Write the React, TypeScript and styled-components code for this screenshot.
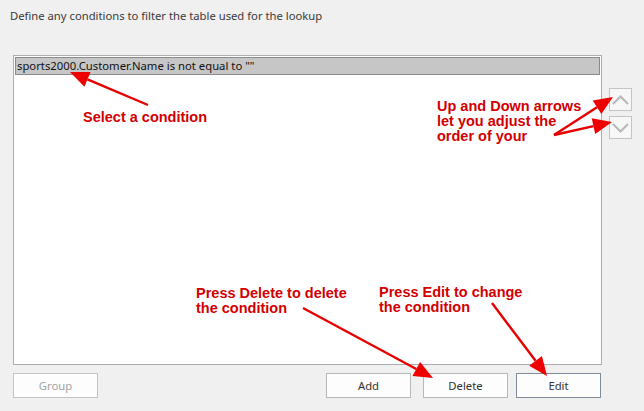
import React from "react";
import styled, { createGlobalStyle } from "styled-components";

const Global = createGlobalStyle`
  html, body { margin: 0; padding: 0; background: #f0f0f0; }
  body { font-family: "Noto Sans", "Open Sans", sans-serif; }
`;

const Page = styled.div`
  position: relative;
  width: 644px;
  height: 411px;
  background: #f0f0f0;
  overflow: hidden;
  font-family: "Noto Sans", "Open Sans", sans-serif;
  color: #333;
`;

const Prompt = styled.div`
  padding: 8px 0 0 10px;
  font-size: 11.25px;
  line-height: 16px;
  color: #3a3a3a;
`;

const Main = styled.div`
  display: flex;
  align-items: flex-start;
  gap: 7px;
  margin-top: 31px;
  padding-left: 13px;
`;

const ListBox = styled.div`
  box-sizing: border-box;
  width: 589px;
  height: 310px;
  padding: 1px;
  background: #fff;
  border: 1px solid #abadb3;
`;

const Row = styled.div<{ $selected?: boolean }>`
  box-sizing: border-box;
  height: 18px;
  padding: 0 1px;
  font-size: 11.3px;
  line-height: 16px;
  color: #111;
  white-space: nowrap;
  background: ${(p) => (p.$selected ? "#c6c6c6" : "transparent")};
  border: 1px solid ${(p) => (p.$selected ? "#8a8a8a" : "transparent")};
`;

const Side = styled.div`
  display: flex;
  flex-direction: column;
  gap: 5px;
  padding-top: 33px;
`;

const ArrowButton = styled.button`
  box-sizing: border-box;
  width: 23px;
  height: 23px;
  padding: 0;
  display: flex;
  align-items: center;
  justify-content: center;
  background: #f7f7f7;
  border: 1px solid #c4c4c4;
  cursor: pointer;
`;

const Footer = styled.div`
  display: flex;
  margin-top: 8px;
  padding-left: 13px;
`;

const Button = styled.button<{ $disabled?: boolean; $default?: boolean; $gap?: number }>`
  box-sizing: border-box;
  width: 85px;
  height: 25px;
  margin-left: ${(p) => p.$gap ?? 0}px;
  padding: 0 0 1px;
  font-family: "Noto Sans", "Open Sans", sans-serif;
  font-size: 11.3px;
  color: ${(p) => (p.$disabled ? "#a3a3a3" : "#333")};
  background: #fdfdfd;
  border: 1px solid ${(p) => (p.$default ? "#7f8c9c" : p.$disabled ? "#c4c4c4" : "#b8b8b8")};
  border-radius: 0;
  cursor: ${(p) => (p.$disabled ? "default" : "pointer")};
`;

const Callout = styled.div<{ $x: number; $y: number }>`
  position: absolute;
  left: ${(p) => p.$x}px;
  top: ${(p) => p.$y}px;
  font-family: "Liberation Sans", Arial, sans-serif;
  font-weight: bold;
  font-size: 14.5px;
  line-height: 15px;
  color: #d20000;
  white-space: nowrap;
`;

const Overlay = styled.svg`
  position: absolute;
  left: 0;
  top: 0;
  pointer-events: none;
`;

function Chevron({ up }: { up?: boolean }) {
  return (
    <svg width="17" height="10" viewBox="0 0 17 10">
      <polyline
        points={up ? "1,9 8.5,1.5 16,9" : "1,1 8.5,8.5 16,1"}
        fill="none"
        stroke="#b8b8b8"
        strokeWidth="2"
      />
    </svg>
  );
}

type Arrow = [number, number, number, number];

const arrows: Arrow[] = [
  [148, 105, 70, 72],
  [554, 135, 613, 97],
  [554, 135, 612, 122],
  [303, 308, 433, 378],
  [492, 303, 547, 376],
];

function ArrowShape({ a }: { a: Arrow }) {
  const [x1, y1, x2, y2] = a;
  const dx = x2 - x1;
  const dy = y2 - y1;
  const len = Math.hypot(dx, dy);
  const ux = dx / len;
  const uy = dy / len;
  const L = 19;
  const W = 8;
  const bx = x2 - ux * L;
  const by = y2 - uy * L;
  const px = -uy * W;
  const py = ux * W;
  return (
    <g>
      <line x1={x1} y1={y1} x2={bx} y2={by} stroke="#e80000" strokeWidth="2.4" />
      <polygon
        points={`${x2},${y2} ${bx + px},${by + py} ${bx - px},${by - py}`}
        fill="#ee0000"
      />
    </g>
  );
}

export default function App() {
  return (
    <Page>
      <Global />
      <Prompt>Define any conditions to filter the table used for the lookup</Prompt>
      <Main>
        <ListBox>
          <Row $selected>sports2000.Customer.Name is not equal to ""</Row>
        </ListBox>
        <Side>
          <ArrowButton aria-label="Move up">
            <Chevron up />
          </ArrowButton>
          <ArrowButton aria-label="Move down">
            <Chevron />
          </ArrowButton>
        </Side>
      </Main>
      <Footer>
        <Button $disabled>Group</Button>
        <Button $gap={228}>Add</Button>
        <Button $gap={12}>Delete</Button>
        <Button $gap={8} $default>
          Edit
        </Button>
      </Footer>

      <Callout $x={83} $y={110}>Select a condition</Callout>
      <Callout $x={437} $y={99}>
        Up and Down arrows
        <br />
        let you adjust the
        <br />
        order of your
      </Callout>
      <Callout $x={196} $y={286}>
        Press Delete to delete
        <br />
        the condition
      </Callout>
      <Callout $x={379} $y={285}>
        Press Edit to change
        <br />
        the condition
      </Callout>
      <Overlay width="644" height="411" viewBox="0 0 644 411">
        {arrows.map((a, i) => (
          <ArrowShape key={i} a={a} />
        ))}
      </Overlay>
    </Page>
  );
}
